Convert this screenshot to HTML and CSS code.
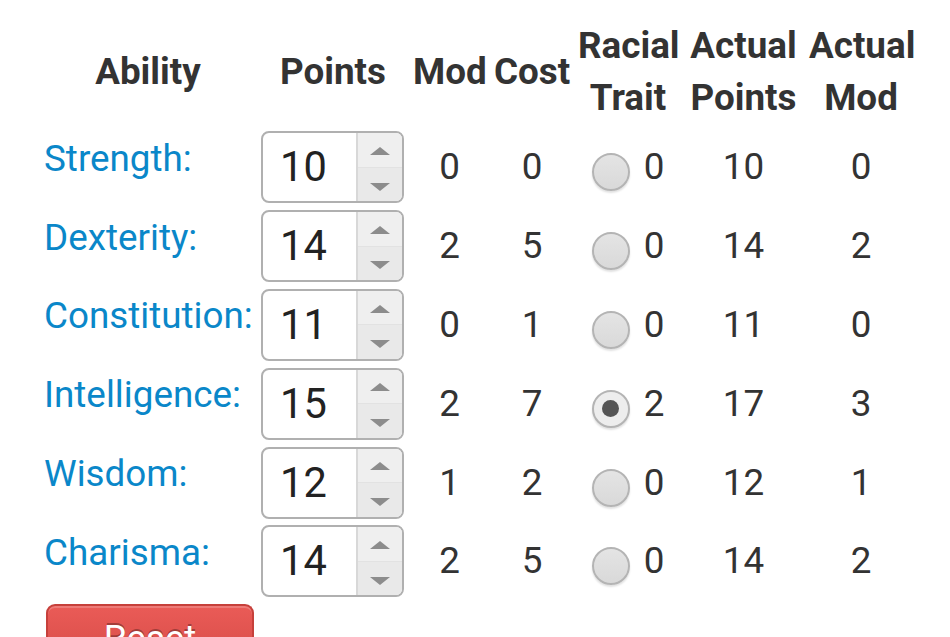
FILE: index.html
```html
<!DOCTYPE html>
<html>
<head>
<meta charset="utf-8">
<link rel="stylesheet" href="styles.css">
</head>
<body>
<div class="page">
<table class="stats">
  <thead>
    <tr>
      <th class="c1">Ability</th>
      <th class="c2">Points</th>
      <th class="c3">Mod</th>
      <th class="c4">Cost</th>
      <th class="c5">Racial Trait</th>
      <th class="c6">Actual Points</th>
      <th class="c7">Actual Mod</th>
    </tr>
  </thead>
  <tbody>
    <tr>
      <td><label class="lbl">Strength:</label></td>
      <td><div class="spin"><span class="val">10</span><span class="step"><span class="up"></span><span class="dn"></span></span></div></td>
      <td>0</td><td>0</td>
      <td><span class="radio"></span>0</td>
      <td>10</td><td>0</td>
    </tr>
    <tr>
      <td><label class="lbl">Dexterity:</label></td>
      <td><div class="spin"><span class="val">14</span><span class="step"><span class="up"></span><span class="dn"></span></span></div></td>
      <td>2</td><td>5</td>
      <td><span class="radio"></span>0</td>
      <td>14</td><td>2</td>
    </tr>
    <tr>
      <td><label class="lbl">Constitution:</label></td>
      <td><div class="spin"><span class="val">11</span><span class="step"><span class="up"></span><span class="dn"></span></span></div></td>
      <td>0</td><td>1</td>
      <td><span class="radio"></span>0</td>
      <td>11</td><td>0</td>
    </tr>
    <tr>
      <td><label class="lbl">Intelligence:</label></td>
      <td><div class="spin"><span class="val">15</span><span class="step"><span class="up"></span><span class="dn"></span></span></div></td>
      <td>2</td><td>7</td>
      <td><span class="radio checked"></span>2</td>
      <td>17</td><td>3</td>
    </tr>
    <tr>
      <td><label class="lbl">Wisdom:</label></td>
      <td><div class="spin"><span class="val">12</span><span class="step"><span class="up"></span><span class="dn"></span></span></div></td>
      <td>1</td><td>2</td>
      <td><span class="radio"></span>0</td>
      <td>12</td><td>1</td>
    </tr>
    <tr>
      <td><label class="lbl">Charisma:</label></td>
      <td><div class="spin"><span class="val">14</span><span class="step"><span class="up"></span><span class="dn"></span></span></div></td>
      <td>2</td><td>5</td>
      <td><span class="radio"></span>0</td>
      <td>14</td><td>2</td>
    </tr>
    <tr>
      <td class="btncell"><button class="btn-reset">Reset</button></td>
      <td></td><td></td><td></td><td></td><td></td><td></td>
    </tr>
  </tbody>
</table>
</div>
</body>
</html>
```

FILE: styles.css
```css
html, body {
  margin: 0;
  padding: 0;
  background: #fff;
  overflow: hidden;
}
body {
  font-family: Roboto, "Liberation Sans", sans-serif;
  font-size: 36.8px;
  line-height: 52px;
  color: #333;
}
.page {
  padding: 16px 0 0 39px;
}
.stats {
  border-collapse: collapse;
  border-spacing: 0;
  table-layout: fixed;
  width: 878px;
}
.stats th {
  font-weight: 700;
  text-align: center;
  vertical-align: middle;
  padding: 4px 4px;
  color: #333;
}
.stats td {
  text-align: center;
  vertical-align: middle;
  padding: 3.4px 4px;
  white-space: nowrap;
}
.stats td:first-child {
  text-align: left;
  padding-left: 5px;
}
.c1 { width: 218px; }
.c2 { width: 152px; }
.c3 { width: 81px; }
.c4 { width: 84px; }
.c5 { width: 108px; }
.c6 { width: 123px; }
.c7 { width: 112px; }
.stats th, .stats td { box-sizing: border-box; }

.lbl {
  display: block;
  color: #0a87c9;
  margin-bottom: 17px;
}
.spin {
  box-sizing: border-box;
  width: 143px;
  height: 72px;
  border: 2.6px solid #b0b0b0;
  border-radius: 8px;
  display: flex;
  overflow: hidden;
  background: #fff;
}
.val {
  flex: 1;
  font-size: 41.6px;
  color: #222;
  line-height: 67px;
  padding-left: 17px;
  text-align: left;
}
.step {
  width: 44px;
  display: flex;
  flex-direction: column;
  border-left: 2px solid #d8d8d8;
  background: #ececec;
}
.up, .dn {
  flex: 1;
  display: flex;
  align-items: center;
  justify-content: center;
}
.up {
  border-bottom: 1px solid #e2e2e2;
  background: #efefef;
}
.dn {
  background: #e9e9e9;
}
.up::before {
  content: "";
  border-left: 10px solid transparent;
  border-right: 10px solid transparent;
  border-bottom: 8px solid #8c8c8c;
  margin-top: 2px;
}
.dn::before {
  content: "";
  border-left: 10px solid transparent;
  border-right: 10px solid transparent;
  border-top: 8px solid #8c8c8c;
  margin-top: 4px;
}
.radio {
  display: inline-block;
  box-sizing: border-box;
  width: 38px;
  height: 38px;
  border-radius: 50%;
  border: 2.6px solid #b4b4b4;
  background: linear-gradient(#e4e4e4, #d9d9d9);
  box-shadow: 0 2px 2px rgba(0, 0, 0, 0.12);
  vertical-align: -12px;
  margin-right: 14px;
  position: relative;
}
.radio.checked {
  background: #ededed;
}
.radio.checked::after {
  content: "";
  position: absolute;
  left: 50%;
  top: 50%;
  width: 17px;
  height: 17px;
  margin: -8.5px 0 0 -8.5px;
  border-radius: 50%;
  background: #555;
}
.stats td.btncell {
  padding-top: 3px;
  padding-left: 4px;
}
.btn-reset {
  display: block;
  box-sizing: border-box;
  width: 208px;
  height: 70px;
  margin-left: 3px;
  font-family: Roboto, "Liberation Sans", sans-serif;
  font-size: 36.8px;
  line-height: 52px;
  color: #fff;
  text-shadow: 0 -2px 0 rgba(0, 0, 0, 0.3);
  border: 2px solid #c6403b;
  border-bottom-color: #9a2d28;
  border-radius: 9px;
  background: linear-gradient(#ea5b57, #d44a45);
  box-shadow: inset 0 2px 0 rgba(255, 255, 255, 0.2);
  padding: 0 20px;
  text-align: center;
}
```
